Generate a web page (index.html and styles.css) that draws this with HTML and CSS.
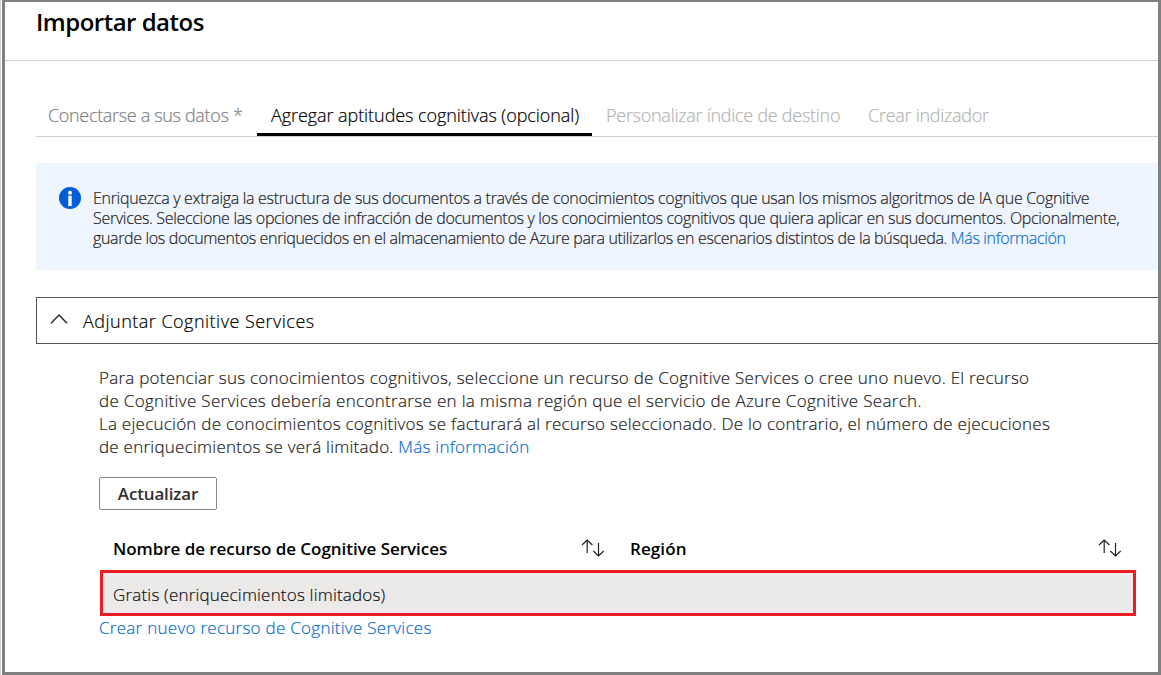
FILE: index.html
```html
<!DOCTYPE html>
<html lang="es">
<head>
<meta charset="utf-8">
<title>Importar datos</title>
<link rel="stylesheet" href="styles.css">
</head>
<body>
<div class="window">
  <header class="header"><h1 class="title">Importar datos</h1></header>
  <nav class="tabs">
    <a class="tab tab-connect">Conectarse a sus datos *</a>
    <a class="tab tab-active">Agregar aptitudes cognitivas (opcional)</a>
    <a class="tab tab-index">Personalizar índice de destino</a>
    <a class="tab tab-indexer">Crear indizador</a>
  </nav>
  <section class="banner">
    <svg class="info-icon" width="22" height="22" viewBox="0 0 22 22"><circle cx="11" cy="11" r="11" fill="#015cda"/><circle cx="11" cy="5.7" r="2" fill="#fff"/><path d="M9.3 8.7h3.4v10.4H9.3z" fill="#fff"/></svg>
    <p class="banner-text">
      <span class="line b1">Enriquezca y extraiga la estructura de sus documentos a través de conocimientos cognitivos que usan los mismos algoritmos de IA que Cognitive</span>
      <span class="line b2">Services. Seleccione las opciones de infracción de documentos y los conocimientos cognitivos que quiera aplicar en sus documentos. Opcionalmente,</span>
      <span class="line b3">guarde los documentos enriquecidos en el almacenamiento de Azure para utilizarlos en escenarios distintos de la búsqueda. <a class="link">Más información</a></span>
    </p>
  </section>
  <div class="accordion">
    <svg class="chevron" width="18" height="12" viewBox="0 0 18 12"><path d="M1 10.2 9 2l8 8.2" fill="none" stroke="#222" stroke-width="1.3"/></svg>
    <span class="accordion-title">Adjuntar Cognitive Services</span>
  </div>
  <main class="content">
    <p class="description">
      <span class="line d1">Para potenciar sus conocimientos cognitivos, seleccione un recurso de Cognitive Services o cree uno nuevo. El recurso</span>
      <span class="line d2">de Cognitive Services debería encontrarse en la misma región que el servicio de Azure Cognitive Search.</span>
      <span class="line d3">La ejecución de conocimientos cognitivos se facturará al recurso seleccionado. De lo contrario, el número de ejecuciones</span>
      <span class="line d4">de enriquecimientos se verá limitado. <a class="link">Más información</a></span>
    </p>
    <button class="refresh">Actualizar</button>
    <div class="table-head">
      <div class="cell"><span class="col-name">Nombre de recurso de Cognitive Services</span><svg class="sort" width="24" height="18" viewBox="0 0 24 18"><path d="M6.2 14V1.2M1 6l5.2-5L11.400 6M17.500 4v12.800M12.300 12l5.200 5L22.700 12" fill="none" stroke="#222" stroke-width="1.2"/></svg></div>
      <div class="cell"><span class="col-region">Región</span><svg class="sort" width="24" height="18" viewBox="0 0 24 18"><path d="M6.2 14V1.2M1 6l5.2-5L11.400 6M17.500 4v12.800M12.300 12l5.200 5L22.700 12" fill="none" stroke="#222" stroke-width="1.2"/></svg></div>
    </div>
    <div class="row"><span class="row-name">Gratis (enriquecimientos limitados)</span></div>
    <a class="link create">Crear nuevo recurso de Cognitive Services</a>
  </main>
</div>
</body>
</html>
```

FILE: styles.css
```css
* { box-sizing: border-box; }
body {
  margin: 0;
  width: 1161px;
  height: 675px;
  overflow: hidden;
  background: #fff;
  border-left: 1px solid #d4d4d4;
  padding-left: 1px;
  font-family: "Open Sans", "Noto Sans", sans-serif;
  font-weight: 300;
  color: #1f1f1f;
}
.window {
  height: 675px;
  border: 3px solid #808080;
  border-top-width: 2px;
  display: flex;
  flex-direction: column;
}
.header {
  height: 59px;
  border-bottom: 1px solid #d0d0d0;
  padding-left: 31px;
}
.title {
  margin: 0;
  font-size: 24px;
  line-height: 39px;
  font-weight: 600;
  letter-spacing: -0.5px;
  color: #000;
  white-space: nowrap;
}
.tabs {
  display: flex;
  height: 45px;
  margin: 31px 0 0 31px;
  border-bottom: 1px solid #cfcfcf;
}
.tab {
  flex: none;
  height: 44px;
  font-size: 18px;
  line-height: 46px;
  white-space: nowrap;
  color: #b4b4b4;
  letter-spacing: -0.27px;
}
.tab, .banner-text, .accordion-title, .description, .row, .create { -webkit-text-stroke: 0.2px currentColor; }
.tab-connect { width: 221px; padding-left: 12px; color: #808080; letter-spacing: -0.33px; }
.tab-active { width: 335px; padding-left: 14px; color: #000; border-bottom: 3px solid #000; letter-spacing: -0.07px; }
.tab-index { width: 262px; padding-left: 14px; }
.tab-indexer { padding-left: 14px; }
.banner {
  display: flex;
  align-items: flex-start;
  gap: 12px;
  height: 107px;
  margin: 26px 0 0 31px;
  padding: 24px 0 0 23px;
  background: #eff5ff;
  border-radius: 3px 0 0 3px;
}
.info-icon { flex: none; }
.banner-text { margin: 1px 0 0; font-size: 16px; line-height: 20px; }
.line { display: block; white-space: nowrap; }
.b1 { letter-spacing: -0.3px; }
.b2 { letter-spacing: -0.317px; }
.b3 { letter-spacing: -0.345px; }
.link { color: #0b6fce; }
.accordion {
  display: flex;
  align-items: center;
  gap: 15px;
  height: 47px;
  margin: 27px 0 0 31px;
  padding-left: 13px;
  border: 1px solid #555;
  border-right: 0;
}
.chevron { position: relative; top: -2px; }
.accordion-title { font-size: 18px; letter-spacing: 0.48px; color: #000; white-space: nowrap; }
.content { display: flex; flex-direction: column; align-items: flex-start; padding: 22px 0 0 94px; }
.description { margin: 0; font-size: 17px; line-height: 23px; letter-spacing: 0.245px; }
.d2 { letter-spacing: 0.315px; }
.refresh {
  width: 118px;
  height: 33px;
  margin-top: 19px;
  padding: 0;
  border: 1px solid #8a8886;
  border-radius: 2px;
  background: #fff;
  font: 600 17px "Open Sans", sans-serif;
  color: #323130;
  letter-spacing: -0.15px;
}
.table-head { display: grid; grid-template-columns: 517px 517px; height: 60px; }
.cell {
  display: flex;
  justify-content: space-between;
  align-items: center;
  padding: 16px 11px 0 14px;
  font-size: 17px;
  font-weight: 600;
  color: #000;
  letter-spacing: -0.05px;
  white-space: nowrap;
}
.col-region { letter-spacing: 0.1px; }
.row {
  width: 1036px;
  height: 46px;
  margin-left: 1px;
  padding-left: 10px;
  border: 3px solid #ed1c24;
  background: #ebeae9;
  font-size: 17px;
  line-height: 43px;
  color: #111;
  letter-spacing: 0.19px;
}
.create { font-size: 17px; line-height: 24px; letter-spacing: 0.27px; white-space: nowrap; }
```
